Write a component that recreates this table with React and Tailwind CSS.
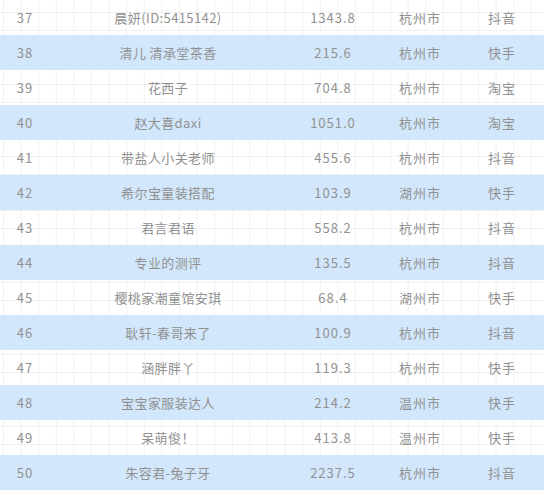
import React from 'react';

const rows = [
  [37, '晨妍(ID:5415142)', '1343.8', '杭州市', '抖音'],
  [38, '清儿 清承堂茶香', '215.6', '杭州市', '快手'],
  [39, '花西子', '704.8', '杭州市', '淘宝'],
  [40, '赵大喜daxi', '1051.0', '杭州市', '淘宝'],
  [41, '带盐人小关老师', '455.6', '杭州市', '抖音'],
  [42, '希尔宝童装搭配', '103.9', '湖州市', '快手'],
  [43, '君言君语', '558.2', '杭州市', '抖音'],
  [44, '专业的测评', '135.5', '杭州市', '抖音'],
  [45, '樱桃家潮童馆安琪', '68.4', '湖州市', '快手'],
  [46, '耿轩-春哥来了', '100.9', '杭州市', '抖音'],
  [47, '涵胖胖丫', '119.3', '杭州市', '快手'],
  [48, '宝宝家服装达人', '214.2', '温州市', '快手'],
  [49, '呆萌俊！', '413.8', '温州市', '快手'],
  [50, '朱容君-兔子牙', '2237.5', '杭州市', '抖音'],
];

export default function App() {
  return (
    <div
      className="w-[544px] h-[490px] overflow-hidden bg-white text-[13px] tracking-[0.4px] text-[#919191] font-['Noto_Sans_CJK_SC',sans-serif] bg-[linear-gradient(to_right,#f1f1f1_1px,transparent_1px),linear-gradient(to_bottom,#f1f1f1_1px,transparent_1px)] bg-[size:17.6px_18px] bg-[position:3px_12px]"
    >
      {rows.map((r, i) => (
        <div
          key={r[0]}
          className={`grid grid-cols-[50px_236px_94px_80px_84px] h-[35px] items-center text-center ${
            i % 2 === 1 ? 'bg-[#d2e7fb]' : ''
          }`}
        >
          <div className="tracking-[1px]">{r[0]}</div>
          <div>{r[1]}</div>
          <div className="tracking-[1px]">{r[2]}</div>
          <div className="tracking-[1px]">{r[3]}</div>
          <div className="tracking-[1px]">{r[4]}</div>
        </div>
      ))}
    </div>
  );
}
